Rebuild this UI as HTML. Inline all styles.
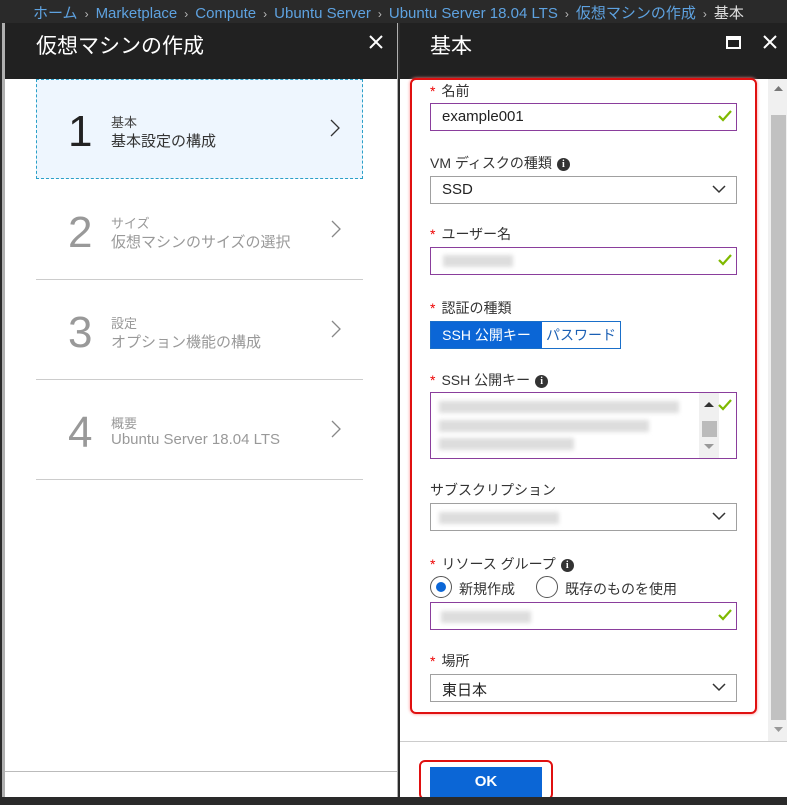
<!DOCTYPE html>
<html><head><meta charset="utf-8"><style>
*{margin:0;padding:0;box-sizing:border-box}
body{width:787px;height:805px;overflow:hidden;background:#2a2a2a;font-family:"Liberation Sans","Noto Sans CJK JP",sans-serif;position:relative}
.a{position:absolute}
.bc{left:33px;top:2px;font-size:15px;color:#5ea2e0;white-space:nowrap}
.bc .s{color:#bbb;margin:0 7px;font-size:12px}
.hdr{background:#212121;color:#fff;font-size:20px}
.lab{font-size:14px;color:#333}
.lab .st{color:#e00;margin-right:6px}
.inp{left:430px;width:307px;height:28px;border:1px solid #8a3e9c;background:#fff;font-size:15px;padding:4px 11px;color:#222}
.sel{left:430px;width:307px;height:28px;border:1px solid #a0a0a0;background:#fff;font-size:15px;padding:4px 11px;color:#222}
.chk{position:absolute;right:4px;top:6px}
.dd{position:absolute;right:10px;top:8px}
.blur{position:absolute;background:#ddd;filter:blur(2px);height:12px}
.info{display:inline-block;width:13px;height:13px;border-radius:50%;background:#333;color:#fff;font-size:10px;text-align:center;line-height:13px;font-weight:bold;vertical-align:middle;margin-left:5px;font-family:"Liberation Serif",serif}
.step{left:36px;width:327px;height:100px}
.num{position:absolute;left:32px;top:28px;font-size:44px;color:#999}
.t1{position:absolute;left:75px;top:33px;font-size:13px;color:#999}
.t2{position:absolute;left:75px;top:51px;font-size:15px;color:#999}
.arr{position:absolute;right:22px;top:40px}
</style></head><body>
<div class="a bc">ホーム<span class="s">›</span>Marketplace<span class="s">›</span>Compute<span class="s">›</span>Ubuntu Server<span class="s">›</span>Ubuntu Server 18.04 LTS<span class="s">›</span>仮想マシンの作成<span class="s">›</span><span style="color:#ddd">基本</span></div>

<div class="a" style="left:2px;top:23px;width:396px;height:774px;background:#b0b0b0"></div>
<div class="a hdr" style="left:5px;top:23px;width:392px;height:56px"><span class="a" style="left:31px;top:7px;font-size:21px">仮想マシンの作成</span>
<svg class="a" style="left:364px;top:12px" width="14" height="14"><path d="M1 1L13 13M13 1L1 13" stroke="#fff" stroke-width="2"/></svg></div>
<div class="a" style="left:5px;top:79px;width:392px;height:718px;background:#fff"></div>
<div class="a" style="left:5px;top:771px;width:392px;height:1px;background:#bbb"></div>

<div class="a step" style="top:79px;background:#eef6fe;border:1px dashed #2aa0c8">
<div class="num" style="color:#222;left:31px;top:27px">1</div><div class="t1" style="color:#444;left:74px;top:32px">基本</div><div class="t2" style="color:#333;left:74px;top:50px">基本設定の構成</div>
<svg class="arr" width="10" height="18" style="top:39px"><path d="M1 1L9 9L1 17" stroke="#333" fill="none" stroke-width="1.3"/></svg></div>
<div class="a step" style="top:180px;border-bottom:1px solid #ccc"><div class="num">2</div><div class="t1">サイズ</div><div class="t2">仮想マシンのサイズの選択</div><svg class="arr" width="10" height="18"><path d="M1 1L9 9L1 17" stroke="#888" fill="none" stroke-width="1.3"/></svg></div>
<div class="a step" style="top:280px;border-bottom:1px solid #ccc"><div class="num">3</div><div class="t1">設定</div><div class="t2">オプション機能の構成</div><svg class="arr" width="10" height="18"><path d="M1 1L9 9L1 17" stroke="#888" fill="none" stroke-width="1.3"/></svg></div>
<div class="a step" style="top:380px;border-bottom:1px solid #ccc"><div class="num">4</div><div class="t1">概要</div><div class="t2">Ubuntu Server 18.04 LTS</div><svg class="arr" width="10" height="18"><path d="M1 1L9 9L1 17" stroke="#888" fill="none" stroke-width="1.3"/></svg></div>

<div class="a hdr" style="left:400px;top:23px;width:387px;height:56px"><span class="a" style="left:30px;top:7px;font-size:21px">基本</span>
<div class="a" style="left:326px;top:13px;width:15px;height:13px;border:2px solid #fff;border-top-width:4px"></div>
<svg class="a" style="left:363px;top:12px" width="14" height="14"><path d="M1 1L13 13M13 1L1 13" stroke="#fff" stroke-width="2"/></svg></div>
<div class="a" style="left:400px;top:79px;width:387px;height:718px;background:#fff"></div>
<div class="a" style="left:768px;top:79px;width:19px;height:662px;background:#f0f0f0"></div>
<div class="a" style="left:771px;top:115px;width:15px;height:605px;background:#c1c1c1"></div>
<svg class="a" style="left:774px;top:86px" width="9" height="6"><path d="M0 5L4.5 0L9 5Z" fill="#777"/></svg>
<svg class="a" style="left:774px;top:727px" width="9" height="6"><path d="M0 0L4.5 5L9 0Z" fill="#999"/></svg>
<div class="a" style="left:400px;top:741px;width:387px;height:1px;background:#ccc"></div>
<div class="a" style="left:410px;top:78px;width:347px;height:636px;border:2px solid #e01010;border-radius:6px;box-shadow:0 0 3px #f88"></div>

<div class="a lab" style="left:430px;top:81px"><span class="st">*</span>名前</div>
<div class="a inp" style="top:103px">example001<svg class="chk" width="14" height="12"><path d="M1 6L5 10L13 1" stroke="#7fb900" stroke-width="2.2" fill="none"/></svg></div>
<div class="a lab" style="left:430px;top:153px">VM ディスクの種類<span class="info">i</span></div>
<div class="a sel" style="top:176px">SSD<svg class="dd" width="14" height="9"><path d="M1 1L7 7L13 1" stroke="#333" stroke-width="1.5" fill="none"/></svg></div>
<div class="a lab" style="left:430px;top:224px"><span class="st">*</span>ユーザー名</div>
<div class="a inp" style="top:247px"><div class="blur" style="left:12px;top:7px;width:70px"></div><svg class="chk" width="14" height="12"><path d="M1 6L5 10L13 1" stroke="#7fb900" stroke-width="2.2" fill="none"/></svg></div>
<div class="a lab" style="left:430px;top:298px"><span class="st">*</span>認証の種類</div>
<div class="a" style="left:430px;top:321px;width:191px;height:28px;border:1px solid #1a6fc9;font-size:14px">
<div class="a" style="left:0;top:0;width:111px;height:26px;background:#0b66d6;color:#fff;text-align:center;line-height:26px">SSH 公開キー</div>
<div class="a" style="left:111px;top:0;width:78px;height:26px;color:#1a5fb4;text-align:center;line-height:26px">パスワード</div></div>
<div class="a lab" style="left:430px;top:370px"><span class="st">*</span>SSH 公開キー<span class="info">i</span></div>
<div class="a inp" style="top:392px;height:67px">
<div class="blur" style="left:8px;top:8px;width:240px"></div><div class="blur" style="left:8px;top:27px;width:210px"></div><div class="blur" style="left:8px;top:45px;width:135px"></div>
<div class="a" style="left:268px;top:0;width:20px;height:65px;background:#f0f0f0"></div>
<svg class="a" style="left:273px;top:9px" width="10" height="6"><path d="M0 5L5 0L10 5Z" fill="#333"/></svg>
<div class="a" style="left:271px;top:28px;width:15px;height:16px;background:#bbb"></div>
<svg class="a" style="left:273px;top:51px" width="10" height="6"><path d="M0 0L5 5L10 0Z" fill="#999"/></svg>
<svg class="chk" width="14" height="12"><path d="M1 6L5 10L13 1" stroke="#7fb900" stroke-width="2.2" fill="none"/></svg></div>
<div class="a lab" style="left:430px;top:480px">サブスクリプション</div>
<div class="a sel" style="top:503px"><div class="blur" style="left:8px;top:8px;width:120px"></div><svg class="dd" width="14" height="9"><path d="M1 1L7 7L13 1" stroke="#333" stroke-width="1.5" fill="none"/></svg></div>
<div class="a lab" style="left:430px;top:554px"><span class="st">*</span>リソース グループ<span class="info">i</span></div>
<div class="a" style="left:430px;top:576px;width:22px;height:22px;border:1px solid #555;border-radius:50%"><div class="a" style="left:5px;top:5px;width:10px;height:10px;border-radius:50%;background:#0b66d6"></div></div>
<div class="a lab" style="left:459px;top:579px;font-size:14px">新規作成</div>
<div class="a" style="left:536px;top:576px;width:22px;height:22px;border:1px solid #555;border-radius:50%"></div>
<div class="a lab" style="left:565px;top:579px">既存のものを使用</div>
<div class="a inp" style="top:602px"><div class="blur" style="left:10px;top:8px;width:90px"></div><svg class="chk" width="14" height="12"><path d="M1 6L5 10L13 1" stroke="#7fb900" stroke-width="2.2" fill="none"/></svg></div>
<div class="a lab" style="left:430px;top:651px"><span class="st">*</span>場所</div>
<div class="a sel" style="top:674px">東日本<svg class="dd" width="14" height="9"><path d="M1 1L7 7L13 1" stroke="#333" stroke-width="1.5" fill="none"/></svg></div>

<div class="a" style="left:419px;top:760px;width:134px;height:40px;border:2px solid #e01010;border-radius:6px"></div>
<div class="a" style="left:430px;top:767px;width:112px;height:30px;background:#0b66d6;color:#fff;font-weight:bold;font-size:15px;text-align:center;line-height:30px">OK</div>
<div class="a" style="left:0;top:797px;width:787px;height:8px;background:#2a2a2a"></div>
</body></html>
